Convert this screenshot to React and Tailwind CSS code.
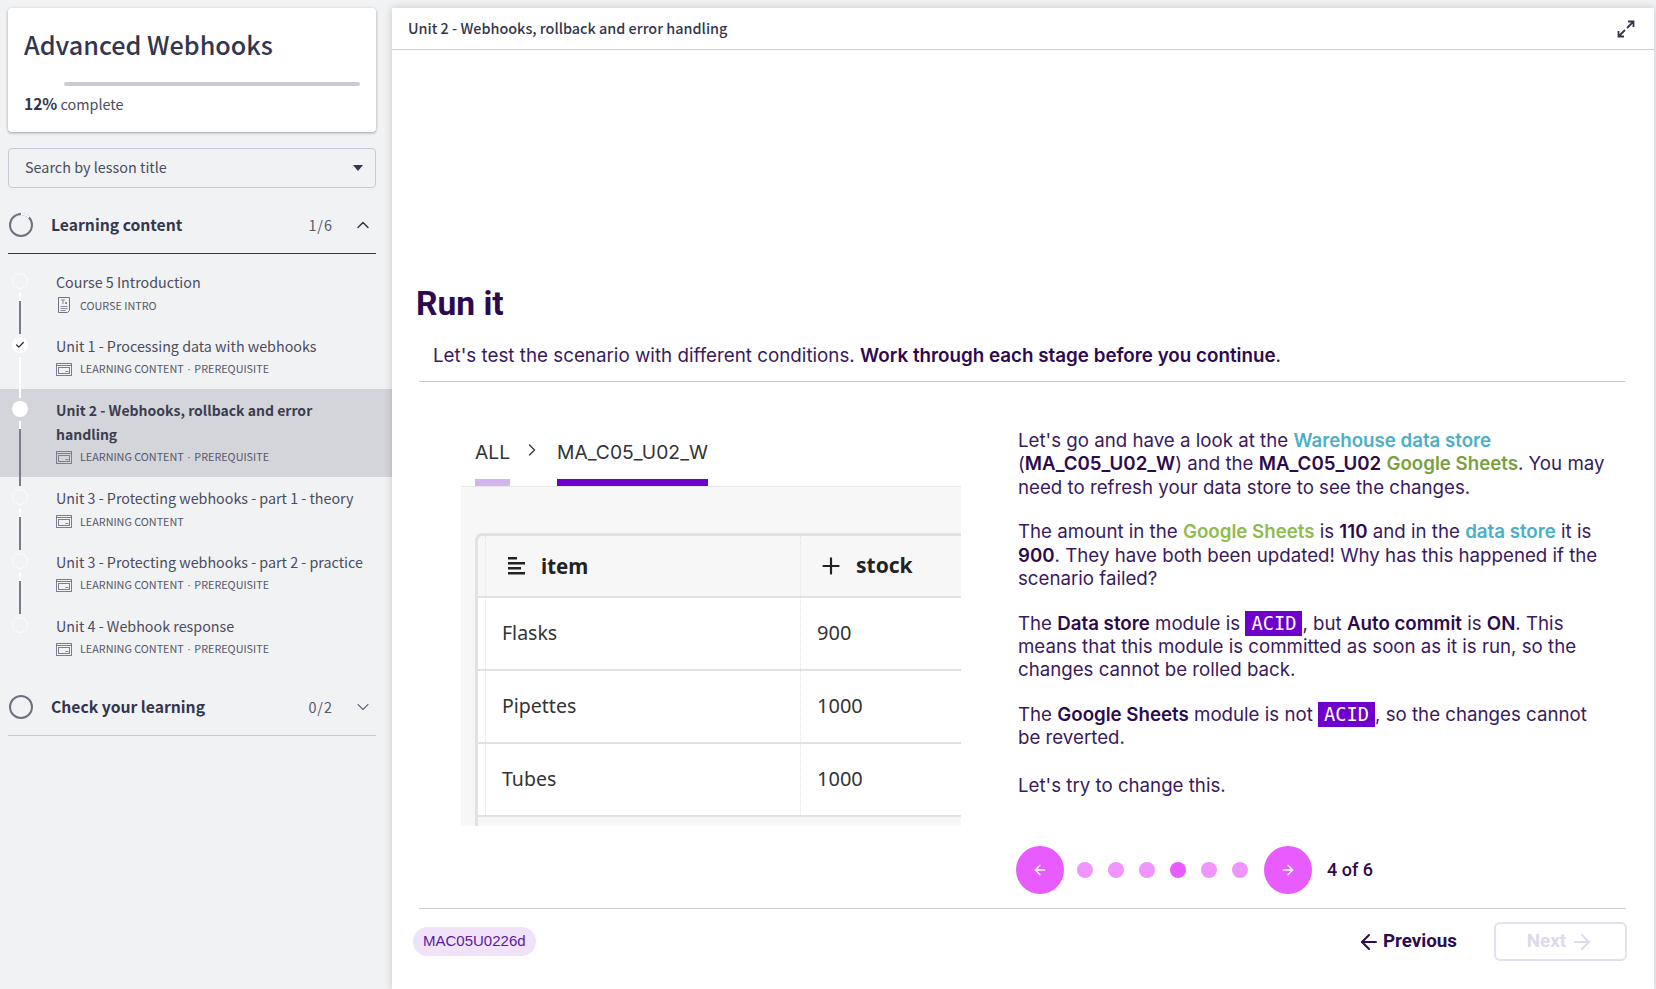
import React from 'react';
import { ChevronUp, ChevronDown, ChevronRight, ArrowLeft, ArrowRight, Plus, Check } from 'lucide-react';

const lessons = [
  { title: 'Course 5 Introduction', kind: 'COURSE INTRO', icon: 'doc', dot: 'empty', line: 'part', h: 'h-[64px]' },
  { title: 'Unit 1 - Processing data with webhooks', kind: 'LEARNING CONTENT', pre: true, dot: 'done', line: 'done', h: 'h-[64px]' },
  { title: 'Unit 2 - Webhooks, rollback and error handling', kind: 'LEARNING CONTENT', pre: true, dot: 'active', line: 'part', h: 'h-[88px]', active: true },
  { title: 'Unit 3 - Protecting webhooks - part 1 - theory', kind: 'LEARNING CONTENT', dot: 'empty', line: 'part', h: 'h-[64px]' },
  { title: 'Unit 3 - Protecting webhooks - part 2 - practice', kind: 'LEARNING CONTENT', pre: true, dot: 'empty', line: 'part', h: 'h-[64px]' },
  { title: 'Unit 4 - Webhook response', kind: 'LEARNING CONTENT', pre: true, dot: 'empty', h: 'h-[64px]' },
];

const rows = [
  ['Flasks', '900'],
  ['Pipettes', '1000'],
  ['Tubes', '1000'],
];

const DocIcon = () => (
  <svg width="14" height="16" viewBox="0 0 14 16" fill="none" stroke="#6f7183" strokeWidth="1">
    <path d="M1.500 .5h11v13l-2 2h-9z" />
    <path d="M4 3h4M6 3v4M8 5l2 2M10 5l-2 2M3.500 9.500h7M3.500 11.500h7M3.500 13.500h5" strokeWidth=".8" />
  </svg>
);

const ContentIcon = () => (
  <svg width="16" height="13" viewBox="0 0 16 13" fill="none" stroke="#7d7f90" strokeWidth="1">
    <rect x=".5" y=".5" width="15" height="12" />
    <path d="M.5 2.500h15" />
    <rect x="2.500" y="4.500" width="11" height="6" />
    <path d="M9.500 8.500h3" />
  </svg>
);

const Ring = ({ progress }) => (
  <svg width="26" height="26" viewBox="0 0 26 26" fill="none" className="shrink-0">
    <circle cx="13" cy="13" r="11" stroke="#6f7183" strokeWidth="2" />
    {progress && <path d="M13 2a11 11 0 0 1 8 3.500" stroke="#ffffff" strokeWidth="2" />}
  </svg>
);

const Lesson = ({ lesson }) => (
  <div className={`flex ${lesson.h} ${lesson.active ? 'bg-[#d4d5da]' : ''}`}>
    <div className="relative z-10 flex w-[56px] shrink-0 flex-col items-center pt-[12px] pr-[16px]">
      <div className="flex h-4 w-4 shrink-0 items-center justify-center rounded-full border border-white/70 data-[on=true]:bg-white" data-on={lesson.dot !== 'empty'}>
        {lesson.dot === 'done' && <Check size={10} strokeWidth={3} color="#22243a" />}
      </div>
      {lesson.line && (
        <div className="mt-[4px] mb-[-9px] flex w-[2px] flex-1 flex-col bg-white">
          <div className="mt-[8px] flex-1 bg-[#7a7c8e] data-[done=true]:hidden" data-done={lesson.line === 'done'} />
        </div>
      )}
    </div>
    <div className="min-w-0 flex-1 pt-[9px] pr-[16px]">
      <div className={`leading-[24px] ${lesson.active ? 'text-[14px] font-semibold text-[#3b3d52]' : 'text-[14.300px] text-[#4a4c60]'}`}>{lesson.title}</div>
      <div className="flex h-[22px] items-center gap-[8px] text-[10.800px] text-[#565869]">
        {lesson.icon === 'doc' ? <span className="mx-[1px]"><DocIcon /></span> : <ContentIcon />}
        <span>
          {lesson.kind}
          {lesson.pre && (
            <>
              <span className="mx-[3.500px] font-['Liberation_Sans',sans-serif]">·</span>PREREQUISITE
            </>
          )}
        </span>
      </div>
    </div>
  </div>
);

const SectionHead = ({ title, count, open, progress, className }) => (
  <div className={`mr-4 ml-2 flex items-center ${className}`}>
    <Ring progress={progress} />
    <span className="ml-[17px] flex-1 text-[15.700px] font-semibold text-[#33364d]">{title}</span>
    <span className="text-[14.400px] tracking-[1px] text-[#565869]">{count}</span>
    <span className="ml-[20px] mr-[3px] text-[#33364d]">
      {open ? <ChevronUp size={20} strokeWidth={1.75} /> : <ChevronDown size={20} strokeWidth={1.25} />}
    </span>
  </div>
);

const Sidebar = () => (
  <aside className="w-[392px] shrink-0 pt-2 font-['Noto_Sans_CJK_SC','Liberation_Sans',sans-serif]">
    <div className="mr-4 ml-2 h-[124px] rounded bg-white px-4 pt-[15px] shadow-[0_1px_3px_rgba(0,0,0,0.35)]">
      <h1 className="text-[25.200px] leading-[42px] font-medium text-[#33364d]">Advanced Webhooks</h1>
      <div className="mt-[17px] ml-[40px] h-[4px] rounded-sm bg-[#c9cad6]" />
      <div className="mt-[5px] text-[14.400px] leading-[24px] text-[#4a4c60]">
        <span className="text-[15.500px] font-semibold text-[#33364d]">12%</span> complete
      </div>
    </div>
    <div className="mr-4 ml-2 mt-4 flex h-[40px] items-center justify-between rounded border border-[#c8c9d6] pr-[12px] pl-4 text-[14.400px] text-[#4a4c60]">
      <span className="pb-[2px]">Search by lesson title</span>
      <span className="h-0 w-0 border-x-[5px] border-t-[6px] border-x-transparent border-t-[#33364d]" />
    </div>
    <SectionHead title="Learning content" count="1/6" open progress className="mt-[16px] h-[50px] border-b border-[#33364d] pb-[8px]" />
    <div className="mt-[7px]">
      {lessons.map((lesson) => (
        <Lesson key={lesson.title} lesson={lesson} />
      ))}
    </div>
    <SectionHead title="Check your learning" count="0/2" className="mt-[10px] h-[57px] border-b border-[#c8c9d6]" />
  </aside>
);

const TableRow = ({ cells, head }) => (
  <div className={`grid grid-cols-[8px_315px_1fr] border-b-[2px] border-[#e2e2e2] ${head ? 'h-[62px] bg-[#f7f7f7]' : 'h-[73px] bg-white'}`}>
    <div className="border-r border-dotted border-[#e4e4e4]" />
    <div className="flex items-center border-r border-dotted border-[#e4e4e4]">{cells[0]}</div>
    <div className="flex items-center">{cells[1]}</div>
  </div>
);

const SheetImage = () => (
  <div className="ml-[42px] w-[500px] overflow-hidden font-['Noto_Sans',sans-serif]">
    <div className="flex h-[56px] items-end pl-[14px] font-['Inter',sans-serif] text-[19.300px] text-[#333]">
      <div className="h-[56px] border-b-[7px] border-[#d2b4ee] pt-[7px] leading-[30px]">ALL</div>
      <ChevronRight size={20} strokeWidth={1.5} className="mr-[15px] ml-[12px] mb-[26px]" />
      <div className="h-[56px] border-b-[7px] border-[#6f00cc] pt-[7px] leading-[30px]">MA_C05_U02_W</div>
    </div>
    <div className="h-[340px] overflow-hidden border-t border-[#e8e8e8] bg-[#f7f7f7] pt-[46px] pl-[14px]">
      <div className="h-full overflow-hidden rounded-tl-lg border-t-[3px] border-l-[3px] border-[#e2e2e2]">
        <TableRow
          head
          cells={[
            <div className="flex items-center gap-[15px] pl-[22px] text-[20.500px] font-bold text-[#222]">
              <svg width="18" height="18" viewBox="0 0 18 18" fill="#222">
                <rect x="0" y="0" width="9" height="2.500" />
                <rect x="0" y="5" width="17" height="2.500" />
                <rect x="0" y="10" width="13" height="2.500" />
                <rect x="0" y="15" width="17" height="2.500" />
              </svg>
              item
            </div>,
            <div className="flex items-center gap-[12px] pl-[17px] text-[21px] font-bold text-[#222]">
              <Plus size={26} strokeWidth={2} />
              stock
            </div>,
          ]}
        />
        {rows.map(([name, stock]) => (
          <TableRow
            key={name}
            cells={[
              <span className="pb-[1px] pl-[16px] text-[19.500px] text-[#333]">{name}</span>,
              <span className="pb-[1px] pl-[16px] text-[20px] text-[#333]">{stock}</span>,
            ]}
          />
        ))}
      </div>
    </div>
  </div>
);

const Acid = () => (
  <code className="bg-[#6f00cc] px-[6px] py-[2px] font-['DejaVu_Sans_Mono',monospace] text-[18.700px] text-white">ACID</code>
);

const Pager = () => (
  <div className="mt-[48px] -ml-[2px] flex items-center font-['Roboto',sans-serif]">
    <button className="flex h-[48px] w-[48px] items-center justify-center rounded-full bg-[#e85cff] text-white">
      <ArrowLeft size={16} />
    </button>
    <div className="ml-[13px] flex items-center gap-[15px]">
      {[1, 2, 3, 4, 5, 6].map((n) => (
        <span key={n} className={`h-4 w-4 rounded-full ${n === 4 ? 'bg-[#e85cff]' : 'bg-[#f094ff]'}`} />
      ))}
    </div>
    <button className="ml-[16px] flex h-[48px] w-[48px] items-center justify-center rounded-full bg-[#e85cff] text-white">
      <ArrowRight size={16} />
    </button>
    <span className="ml-[15px] text-[18px] font-medium text-[#2d0a4e]">4 of 6</span>
  </div>
);

const Copy = () => (
  <div className="w-[590px] font-['Inter',sans-serif] text-[18.700px] leading-[23.300px] text-[#3a1a5e] [&_b]:font-semibold [&_b]:text-[#2d0a4e] [&_p]:mb-[21.500px]">
    <p>
      Let's go and have a look at the <b className="!text-[#4bb0c6]">Warehouse data store</b> (<b>MA_C05_U02_W</b>) and the <b>MA_C05_U02</b>{' '}
      <b className="!text-[#7a9f3e]">Google Sheets</b>. You may need to refresh your data store to see the changes.
    </p>
    <p>
      The amount in the <b className="!text-[#8fbb4f]">Google Sheets</b> is <b>110</b> and in the <b className="!text-[#4bb0c6]">data store</b> it is <b>900</b>. They have both been updated! Why has this happened if the scenario failed?
    </p>
    <p>
      The <b>Data store</b> module is <Acid />, but <b>Auto commit</b> is <b>ON</b>. This means that this module is committed as soon as it is run, so the changes cannot be rolled back.
    </p>
    <p>
      The <b>Google Sheets</b> module is not <Acid />, so the changes cannot be reverted.
    </p>
    <p className="!mb-0 pt-[3px]">Let's try to change this.</p>
  </div>
);

const Main = () => (
  <main className="mt-2 mr-[2px] flex min-w-0 flex-1 flex-col bg-white shadow-[0_0_8px_rgba(0,0,0,0.18)]">
    <header className="flex h-[42px] shrink-0 items-center justify-between border-b border-[#cfcfcf] pr-[19px] pl-4 font-['Noto_Sans_CJK_SC',sans-serif] text-[14.400px] font-medium text-[#33364d]">
      <span className="pb-[2px]">Unit 2 - Webhooks, rollback and error handling</span>
      <svg width="18" height="18" viewBox="0 0 18 18" fill="none" stroke="#33364d" strokeWidth="1.800">
        <path d="M10 8l6-6M11 1.500h5.500V7M8 10l-6 6M7 16.500H1.500V11" />
      </svg>
    </header>
    <div className="ml-[27px] mr-[28px] flex-1">
      <h2 className="mt-[234px] -ml-[3px] h-[40px] font-['Roboto',sans-serif] text-[33.600px] leading-[40px] font-bold text-[#2d0a4e]">Run it</h2>
      <div className="h-[58px] border-b border-[#cfcfcf] pt-[20px] pl-[14px] font-['Inter',sans-serif] text-[18.800px] leading-[24px] text-[#3a1a5e]">
        Let's test the scenario with different conditions. <span className="font-semibold text-[#2d0a4e]">Work through each stage before you continue</span>.
      </div>
      <div className="flex h-[527px] border-b border-[#cfcfcf]">
        <div className="w-[599px] shrink-0 pt-[48px]">
          <SheetImage />
        </div>
        <div className="pt-[47px]">
          <Copy />
          <Pager />
        </div>
      </div>
      <footer className="flex h-[62px] items-center justify-between pt-[3px] font-['Roboto',sans-serif]">
        <span className="-ml-[6px] flex h-[29px] items-center rounded-full bg-[#f0e3f9] px-[10px] font-['Liberation_Sans',sans-serif] text-[15px] text-[#5a1a9a]">MAC05U0226d</span>
        <div className="flex items-center gap-[37px]">
          <button className="flex items-center gap-[2px] text-[18.800px] font-bold text-[#2d0a4e]">
            <ArrowLeft size={24} strokeWidth={2} />
            Previous
          </button>
          <button className="-mr-[1px] flex h-[39px] w-[133px] items-center justify-center gap-[4px] rounded-md border-2 border-[#e5e0ee] text-[18.800px] font-bold text-[#e0d9ec]">
            Next
            <ArrowRight size={24} strokeWidth={2} />
          </button>
        </div>
      </footer>
    </div>
  </main>
);

export default function App() {
  return (
    <div className="flex h-[989px] w-[1656px] overflow-hidden bg-[#f1f2f4]">
      <Sidebar />
      <Main />
    </div>
  );
}
